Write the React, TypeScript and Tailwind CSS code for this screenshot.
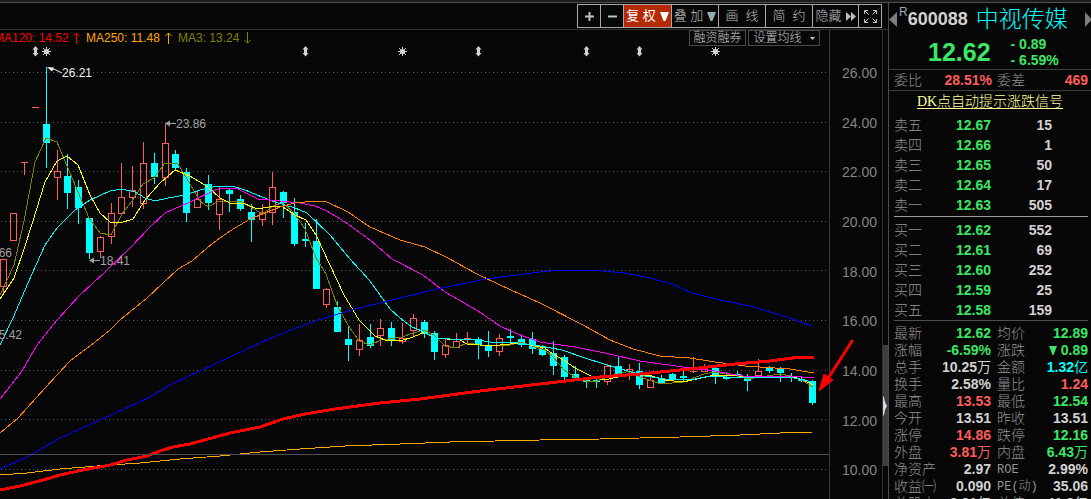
import React from "react";

type Tone = "green" | "red" | "cyan" | "white";

const toneClass: Record<Tone, string> = {
  green: "text-[#3ce664]",
  red: "text-[#ff5c5c]",
  cyan: "text-[#00ffff]",
  white: "text-[#d2d2d2]",
};

const cjk = "font-['Liberation_Sans','Noto_Sans_CJK_SC',sans-serif]";
const mono = "font-['Liberation_Mono','Noto_Sans_CJK_SC',monospace]";
const serif = "font-['Liberation_Serif','Noto_Sans_CJK_SC',serif]";

/* x centre, high, body top, body bottom, low, rising */
type Candle = [number, number, number, number, number, boolean];

const candles: Candle[] = [
  [3, 259, 259, 286, 294, true],
  [13, 213, 213, 240, 240, true],
  [24, 162, 162, 162, 175, true],
  [35, 107, 107, 107, 107, true],
  [46, 67, 124, 143, 168, false],
  [57, 150, 171, 177, 200, true],
  [67, 154, 176, 193, 209, false],
  [78, 180, 187, 208, 224, false],
  [89, 218, 218, 253, 259, false],
  [100, 236, 237, 251, 258, true],
  [111, 203, 213, 236, 244, true],
  [121, 163, 197, 213, 215, true],
  [132, 166, 190, 197, 207, true],
  [143, 142, 163, 203, 209, true],
  [154, 153, 163, 177, 184, false],
  [165, 124, 143, 177, 186, true],
  [175, 150, 154, 168, 171, false],
  [186, 168, 172, 213, 222, false],
  [197, 191, 199, 207, 208, true],
  [208, 175, 184, 203, 210, false],
  [219, 186, 199, 214, 230, true],
  [229, 188, 190, 194, 212, false],
  [240, 195, 199, 209, 211, false],
  [251, 204, 212, 220, 242, false],
  [262, 204, 212, 219, 226, true],
  [272, 172, 187, 212, 225, true],
  [283, 191, 192, 203, 218, false],
  [294, 198, 212, 244, 246, false],
  [305, 223, 239, 241, 247, false],
  [316, 219, 241, 289, 289, false],
  [326, 288, 289, 304, 308, true],
  [337, 301, 307, 332, 332, false],
  [348, 326, 339, 345, 361, false],
  [359, 324, 340, 349, 356, true],
  [370, 324, 337, 346, 348, false],
  [380, 319, 328, 335, 346, true],
  [391, 322, 328, 341, 346, false],
  [402, 323, 338, 341, 344, true],
  [413, 314, 318, 330, 336, true],
  [424, 320, 322, 334, 338, false],
  [434, 331, 333, 352, 360, false],
  [445, 339, 345, 354, 358, true],
  [456, 333, 341, 347, 348, true],
  [467, 332, 338, 338, 344, true],
  [478, 337, 339, 345, 359, false],
  [488, 331, 346, 351, 357, false],
  [499, 334, 338, 351, 356, true],
  [510, 329, 336, 338, 343, false],
  [521, 336, 339, 345, 347, false],
  [532, 332, 339, 349, 354, false],
  [542, 345, 349, 355, 356, false],
  [553, 341, 353, 366, 375, false],
  [564, 355, 357, 377, 380, false],
  [575, 366, 374, 378, 378, false],
  [586, 379, 380, 382, 388, false],
  [596, 379, 380, 382, 388, false],
  [607, 364, 366, 381, 385, true],
  [618, 357, 366, 374, 375, false],
  [629, 364, 369, 371, 380, true],
  [639, 363, 371, 385, 389, false],
  [650, 376, 380, 387, 387, true],
  [661, 375, 379, 383, 383, false],
  [672, 373, 374, 380, 380, false],
  [683, 371, 376, 378, 381, false],
  [693, 357, 371, 371, 373, true],
  [704, 364, 369, 371, 371, true],
  [715, 367, 368, 375, 384, false],
  [726, 372, 377, 379, 380, false],
  [737, 371, 374, 376, 377, false],
  [747, 374, 379, 381, 391, false],
  [758, 359, 371, 375, 378, true],
  [769, 366, 367, 371, 373, false],
  [780, 367, 369, 373, 382, false],
  [791, 373, 376, 378, 382, false],
  [801, 377, 379, 381, 382, false],
  [812, 380, 381, 403, 405, false],
];

const averages = [
  {
    name: "MA3",
    color: "#808000",
    width: 1,
    points:
      "0,295 14,265 24,221 35,162 46,138 57,142 67,166 78,192 89,218 100,233 111,235 122,214 132,201 143,184 154,178 165,163 178,164 190,184 200,201 208,207 219,201 240,201 251,207 262,214 275,205 283,203 294,213 305,229 316,258 326,274 337,305 348,325 359,341 370,345 381,340 402,337 413,333 424,330 434,335 445,346 456,348 467,343 480,345 510,345 521,342 532,346 545,350 553,357 564,370 575,377 586,381 597,381 610,376 630,371 640,377 661,384 683,382 704,374 715,372 737,376 747,379 780,374 791,376 803,381 813,387",
  },
  {
    name: "MA5",
    color: "#ffff00",
    width: 1,
    points:
      "0,299 14,278 24,249 33,221 45,182 57,161 67,156 78,165 90,195 100,213 110,222 120,223 133,219 145,200 160,183 175,170 190,176 208,187 220,198 230,203 245,204 255,208 263,208 275,206 283,207 295,215 306,220 316,235 330,265 344,295 359,320 375,336 385,340 400,341 413,337 425,332 435,338 447,339 460,340 467,344 480,345 500,345 520,343 535,346 545,348 553,354 565,361 575,368 595,378 605,380 630,374 652,376 665,380 683,382 710,376 730,375 747,377 760,377 790,376 803,380 813,385",
  },
  {
    name: "MA10",
    color: "#00ffff",
    width: 1,
    points:
      "0,345 13,318 28,283 45,245 57,228 75,210 90,200 110,191 122,189 135,192 145,198 155,201 168,198 185,195 200,190 213,187 232,186 245,190 262,197 275,202 295,208 307,213 330,235 350,259 370,281 390,309 400,318 412,327 422,331 435,338 450,339 478,340 490,342 510,342 525,344 540,346 562,350 585,358 607,365 628,371 645,376 665,379 690,380 710,376 740,378 760,377 790,377 812,382",
  },
  {
    name: "MA20",
    color: "#ff00ff",
    width: 1,
    points:
      "0,399 22,371 37,345 57,320 80,295 105,272 130,248 150,227 165,213 190,202 215,190 226,188 238,189 258,199 270,200 300,203 315,206 327,211 345,222 370,240 392,259 423,275 445,292 478,311 500,326 515,333 540,342 575,347 605,353 640,361 690,368 715,371 730,374 750,377 790,376 814,378",
  },
  {
    name: "MA30",
    color: "#ff8000",
    width: 1,
    points:
      "0,433 18,418 45,388 70,361 90,346 110,330 120,320 147,298 178,269 192,261 213,243 230,231 250,219 280,207 295,203 315,201 327,202 348,212 370,227 400,240 425,247 448,258 475,273 500,285 540,303 583,325 610,340 633,349 660,356 690,358 715,362 745,366 790,369 814,373",
  },
  {
    name: "MA60",
    color: "#0000ff",
    width: 1,
    points:
      "0,469 27,457 60,438 100,420 150,397 170,385 200,371 230,357 260,343 283,333 315,321 355,309 384,302 437,289 486,279 540,272 560,270 592,270 625,273 650,278 672,284 692,293 720,300 750,306 790,318 812,326",
  },
  {
    name: "MA250",
    color: "#ffa500",
    width: 1,
    points:
      "0,475 27,473 60,469 110,465 140,463 180,459 220,456 260,452 300,449 345,446 400,444 450,442 540,440 600,439 680,437 740,435 780,433 812,432",
  },
  {
    name: "MA120",
    color: "#ff0000",
    width: 3,
    points:
      "0,490 20,486 43,480 60,475 83,470 100,467 110,465 127,460 147,456 160,451 173,447 190,444 230,433 260,427 283,419 305,414 335,409 380,403 420,399 450,395 480,391 540,384 600,377 640,374 690,369 735,364 770,361 800,357 814,357",
  },
];

const gridLines = [72, 122, 171, 221, 270, 320, 370, 419, 469];
const priceTicks = ["26.00", "24.00", "22.00", "20.00", "18.00", "16.00", "14.00", "12.00", "10.00"];
const dividendMarks = [35, 305, 478, 586, 639];
const eventMarks = [46, 402, 715];

function CandleShape({ data }: { data: Candle }) {
  const [x, high, top, bottom, low, rising] = data;
  if (!rising) {
    return (
      <g fill="#00ffff">
        <rect x={x} y={high} width={1} height={Math.max(low - high, 1)} />
        <rect x={x - 3} y={top} width={7} height={bottom - top} />
      </g>
    );
  }
  return (
    <g fill="#ff5c5c">
      <rect x={x} y={high} width={1} height={top - high} />
      <rect x={x} y={bottom} width={1} height={low - bottom} />
      {bottom - top < 2 ? (
        <rect x={x - 3} y={top} width={7} height={1} />
      ) : (
        <path
          fillRule="evenodd"
          d={`M${x - 3} ${top}h7V${bottom + 1}h-7ZM${x - 2} ${top + 1}V${bottom}h5V${top + 1}Z`}
        />
      )}
    </g>
  );
}

function Chart() {
  return (
    <svg
      className={`block h-full w-full text-xs ${cjk}`}
      viewBox="0 46 829 453"
      preserveAspectRatio="xMaxYMin slice"
      role="img"
      aria-label="600088 K线图"
    >
      <g stroke="#5a5a5a" strokeDasharray="1 3" shapeRendering="crispEdges">
        {gridLines.map((y) => (
          <line key={y} x1="1" x2="829" y1={y + 0.5} y2={y + 0.5} />
        ))}
      </g>
      <g fill="#d0d0d0">
        {dividendMarks.map((x) => (
          <path key={x} d={`M${x + 0.5} 46l3 3.500h-1.500v3.500h1.500l-3 3.500l-3-3.500h1.500v-3.500h-1.500z`} />
        ))}
        {eventMarks.map((x) => (
          <g key={x}>
            <circle cx={x + 0.5} cy="51.500" r="2.600" />
            <path
              stroke="#d0d0d0"
              d={`M${x + 0.5} 47v9M${x - 4} 51.500h9M${x - 3} 48l7 7M${x + 4} 48l-7 7`}
            />
          </g>
        ))}
      </g>
      <g shapeRendering="crispEdges">
        {candles.map((c) => (
          <CandleShape key={c[0]} data={c} />
        ))}
      </g>
      <g fill="none" shapeRendering="crispEdges">
        {averages.map((a) => (
          <polyline key={a.name} points={a.points} stroke={a.color} strokeWidth={a.width} />
        ))}
      </g>
      <line x1="0" x2="829" y1="454.500" y2="454.500" stroke="#505050" />
      <g stroke="#f4f4f4" fill="#f4f4f4">
        <path fill="none" d="M50 68.500l5 1l7 3.500" />
        <path stroke="none" d="M47 67l7 .5l-2 4z" />
        <text x="62" y="77" stroke="none">26.21</text>
      </g>
      <g stroke="#a0a0a0" fill="#a0a0a0">
        <path d="M167 123.500h9" />
        <path stroke="none" d="M165 123.500l5-3v6z" />
        <text x="176" y="128" stroke="none">23.86</text>
        <path d="M91 260.500h9" />
        <path stroke="none" d="M89 260.500l5-3v6z" />
        <text x="100" y="265" stroke="none">18.41</text>
        <text x="12" y="257" stroke="none" textAnchor="end">66</text>
        <text x="22" y="339" stroke="none" textAnchor="end">5.42</text>
      </g>
    </svg>
  );
}

function PointerArrow() {
  return (
    <svg className="absolute top-[309px] left-[818px]" width="37" height="54" viewBox="818 339 37 54" aria-hidden="true">
      <path d="M852 341L829 377" stroke="#ff0000" strokeWidth="3" strokeLinecap="round" />
      <path d="M819 391L824 374L827 376L833 380Z" fill="#ff0000" stroke="#ff0000" />
    </svg>
  );
}

function ToolButton({ children, label, className = "" }: { children: React.ReactNode; label?: string; className?: string }) {
  return (
    <button
      type="button"
      aria-label={label}
      className={`flex h-6 items-center justify-center gap-1 border border-[#a8a8a8] whitespace-nowrap text-[#c0c0c0] ${className}`}
    >
      {children}
    </button>
  );
}

function Caret({ className = "" }: { className?: string }) {
  return (
    <svg className={className} width="9" height="9" viewBox="0 0 9 9" fill="currentColor" aria-hidden="true">
      <path d="M0 0h9L5.500 9h-2z" />
    </svg>
  );
}

function Toolbar() {
  return (
    <div className="flex h-[27px] shrink-0 items-center justify-end border-b border-[#303030] pr-[6px] text-[13px] leading-4 font-light">
      <ToolButton label="放大" className="w-6">
        <svg width="9" height="9" viewBox="0 0 9 9" stroke="currentColor" strokeWidth="2"><path d="M4.500 0v9M0 4.500h9" /></svg>
      </ToolButton>
      <ToolButton label="缩小" className="-ml-px w-6">
        <svg width="9" height="9" viewBox="0 0 9 9" stroke="currentColor" strokeWidth="2"><path d="M0 4.500h9" /></svg>
      </ToolButton>
      <ToolButton className="-ml-px w-[49px] bg-[#b32a05] font-normal text-white">
        <span>复 权</span>
        <Caret />
      </ToolButton>
      <ToolButton className="-ml-px w-12">
        <span>叠 加</span>
        <Caret className="text-[#98a8b0]" />
      </ToolButton>
      <ToolButton className="-ml-px w-12">画&nbsp; 线</ToolButton>
      <ToolButton className="-ml-px w-12">简&nbsp; 约</ToolButton>
      <ToolButton className="-ml-px w-[47px]">
        <span>隐藏</span>
        <svg width="10" height="9" viewBox="0 0 10 9" fill="currentColor" aria-hidden="true"><path d="M0 0l5 4.500l-5 4.500zM5 0l5 4.500l-5 4.500z" /></svg>
      </ToolButton>
      <ToolButton label="全屏" className="-ml-px w-6">
        <svg width="13" height="13" viewBox="0 0 13 13" fill="none" stroke="currentColor" aria-hidden="true">
          <path d="M.5 4V.5H4M.5.500l4 4M9 .5h3.500V4M12.500.500l-4 4M.5 9v3.500H4M.5 12.500l4-4M9 12.500h3.500V9M12.500 12.500l-4-4" />
        </svg>
      </ToolButton>
    </div>
  );
}

function TrendArrow({ down = false }: { down?: boolean }) {
  return (
    <svg width="7" height="12" viewBox="0 0 7 12" fill="none" stroke="currentColor" aria-hidden="true">
      <path d={down ? "M3.500 0v11M.5 8l3 3l3-3" : "M3.500 12V1M.5 4l3-3l3 3"} />
    </svg>
  );
}

function Legend() {
  return (
    <div className="flex h-4 shrink-0 items-center justify-between overflow-hidden pr-[9px] text-xs leading-4">
      <div className="-ml-1.5 flex h-4 items-center gap-[6px] whitespace-nowrap">
        <span className="flex w-[86px] items-center justify-between text-[#ff0000]">
          MA120: 14.52 <TrendArrow />
        </span>
        <span className="flex w-[86px] items-center justify-between text-[#ffa500]">
          MA250: 11.48 <TrendArrow />
        </span>
        <span className="flex w-[73px] items-center justify-between text-[#808000]">
          MA3: 13.24 <TrendArrow down />
        </span>
      </div>
      <div className="flex items-center gap-[2px] font-light text-[#c8c8c8]">
        <button type="button" className="h-4 w-[57px] border border-[#4a4a4a] text-center leading-[14px] whitespace-nowrap">
          融资融券
        </button>
        <button type="button" className="flex h-4 w-[72px] items-center justify-center gap-2 border border-[#4a4a4a] leading-[14px] whitespace-nowrap">
          设置均线
          <svg width="5" height="3" viewBox="0 0 5 3" fill="currentColor" aria-hidden="true"><path d="M0 0h5L2.500 3z" /></svg>
        </button>
      </div>
    </div>
  );
}

const asks: [string, string, string][] = [
  ["卖五", "12.67", "15"],
  ["卖四", "12.66", "1"],
  ["卖三", "12.65", "50"],
  ["卖二", "12.64", "17"],
  ["卖一", "12.63", "505"],
];
const bids: [string, string, string][] = [
  ["买一", "12.62", "552"],
  ["买二", "12.61", "69"],
  ["买三", "12.60", "252"],
  ["买四", "12.59", "25"],
  ["买五", "12.58", "159"],
];

function Levels({ rows, label }: { rows: [string, string, string][]; label: string }) {
  return (
    <table className="w-full table-fixed border-collapse text-sm leading-5" aria-label={label}>
      <tbody>
        {rows.map(([name, price, qty]) => (
          <tr key={name} className="h-5">
            <th scope="row" className="w-11 p-0 text-left font-light text-[#949494]">{name}</th>
            <td className="w-[53px] p-0 text-right font-bold text-[#3ce664]">{price}</td>
            <td className="p-0 pr-9 text-right font-bold text-[#d2d2d2]">{qty}</td>
          </tr>
        ))}
      </tbody>
    </table>
  );
}

type Cell = { name: string; value: string; unit?: string; tone: Tone; down?: boolean };

const stats: [Cell, Cell][] = [
  [{ name: "最新", value: "12.62", tone: "green" }, { name: "均价", value: "12.89", tone: "green" }],
  [{ name: "涨幅", value: "-6.59%", tone: "green" }, { name: "涨跌", value: "0.89", tone: "green", down: true }],
  [{ name: "总手", value: "10.25", unit: "万", tone: "white" }, { name: "金额", value: "1.32", unit: "亿", tone: "cyan" }],
  [{ name: "换手", value: "2.58%", tone: "white" }, { name: "量比", value: "1.24", tone: "red" }],
  [{ name: "最高", value: "13.53", tone: "red" }, { name: "最低", value: "12.54", tone: "green" }],
  [{ name: "今开", value: "13.51", tone: "white" }, { name: "昨收", value: "13.51", tone: "white" }],
  [{ name: "涨停", value: "14.86", tone: "red" }, { name: "跌停", value: "12.16", tone: "green" }],
  [{ name: "外盘", value: "3.81", unit: "万", tone: "red" }, { name: "内盘", value: "6.43", unit: "万", tone: "green" }],
  [{ name: "净资产", value: "2.97", tone: "white" }, { name: "ROE", value: "2.99%", tone: "white" }],
  [{ name: "收益㈠", value: "0.090", tone: "white" }, { name: "PE(动)", value: "35.06", tone: "white" }],
  [{ name: "总股本", value: "3.31", unit: "亿", tone: "white" }, { name: "总值", value: "41.8", unit: "亿", tone: "white" }],
];

function StatPair({ cell, second = false }: { cell: Cell; second?: boolean }) {
  const latin = /^[A-Z]/.test(cell.name);
  return (
    <>
      <th
        scope="row"
        className={`p-0 text-left font-light whitespace-nowrap text-[#949494] ${second ? "w-10 pl-[6px]" : "w-11"} ${latin ? `text-xs ${mono}` : ""}`}
      >
        {cell.name}
      </th>
      <td className={`p-0 text-right font-bold whitespace-nowrap ${second ? "pr-[3px]" : "w-[53px]"} ${toneClass[cell.tone]}`}>
        {cell.down && (
          <svg className="mr-1 inline-block align-baseline" width="8" height="9" viewBox="0 0 8 9" fill="currentColor" aria-hidden="true">
            <path d="M0 0h8L4.500 9h-1z" />
          </svg>
        )}
        {cell.value}
        {cell.unit && <span className="font-normal">{cell.unit}</span>}
      </td>
    </>
  );
}

function QuotePanel() {
  return (
    <aside className="flex w-[203px] shrink-0 flex-col overflow-hidden border-l border-[#4a4a4a]">
      <header className="flex h-8 shrink-0 items-center">
        <button type="button" aria-label="上一只" className="text-[#7c7c7c]">
          <svg width="8" height="15" viewBox="0 0 8 15" fill="currentColor"><path d="M8 0v15L0 7.500z" /></svg>
        </button>
        <span className="ml-[2px] self-start pt-px text-xs leading-4 text-[#a0a8b8]">R</span>
        <span className="text-lg leading-8 font-bold text-[#d2d2d2]">600088</span>
        <h1 className="ml-2 text-[23px] leading-8 font-light whitespace-nowrap text-[#00ffff]">中视传媒</h1>
        <button type="button" aria-label="下一只" className="ml-auto text-[#7c7c7c]">
          <svg width="6" height="15" viewBox="0 0 6 15" fill="currentColor"><path d="M0 0l7 7.500L0 15z" /></svg>
        </button>
      </header>
      <div className="flex h-[34px] shrink-0 items-center pl-[39px] font-bold text-[#3ce664]">
        <span className="text-[25px] leading-8">12.62</span>
        <div className="ml-5 text-sm leading-4">
          <div>- 0.89</div>
          <div>- 6.59%</div>
        </div>
      </div>
      <table className="w-full shrink-0 table-fixed border-collapse border-y border-[#3c3c3c] text-sm leading-5">
        <tbody>
          <tr className="h-5">
            <th scope="row" className="w-12 p-0 pl-[5px] text-left font-light text-[#949494]">委比</th>
            <td className="w-[55px] p-0 text-right font-bold text-[#ff5c5c]">28.51%</td>
            <th scope="row" className="w-10 p-0 pl-[5px] text-left font-light text-[#949494]">委差</th>
            <td className="p-0 pr-[3px] text-right font-bold text-[#ff5c5c]">469</td>
          </tr>
        </tbody>
      </table>
      <a href="#dk" className={`h-6 shrink-0 text-center text-sm leading-[22px] font-light whitespace-nowrap text-[#ffff99] underline underline-offset-2 ${serif}`}>
        DK点自动提示涨跌信号
      </a>
      <div className="shrink-0 pl-[5px]">
        <div className="mr-[3px] border-b border-[#a0a0a0] pb-px">
          <Levels rows={asks} label="卖盘" />
        </div>
        <div className="mr-[3px] border-b border-[#505050] pt-[3px]">
          <Levels rows={bids} label="买盘" />
        </div>
        <table className="mt-1 w-full table-fixed border-collapse text-sm leading-[17px]" aria-label="行情指标">
          <tbody>
            {stats.map(([a, b]) => (
              <tr key={a.name} className="h-[17px]">
                <StatPair cell={a} />
                <StatPair cell={b} second />
              </tr>
            ))}
          </tbody>
        </table>
      </div>
    </aside>
  );
}

export default function App() {
  return (
    <div className={`flex h-screen w-full flex-col overflow-hidden bg-[#070707] ${cjk}`}>
      <div className="h-[3px] shrink-0 border-b border-[#505050] bg-[#1c1c1c]" />
      <main className="flex min-h-0 flex-1">
        <section className="flex min-w-0 flex-1 flex-col">
          <Toolbar />
          <div className="relative flex min-h-0 flex-1">
            <div className="flex min-w-0 flex-1 flex-col">
              <Legend />
              <div className="min-h-0 flex-1">
                <Chart />
              </div>
            </div>
            <ol className="flex w-[53px] shrink-0 flex-col border-l border-[#383838] pt-[18px] pb-1 text-sm text-[#848484]">
              {priceTicks.map((t) => (
                <li key={t} className="flex flex-1 items-center justify-end pr-[5px]">{t}</li>
              ))}
            </ol>
            <div className="flex w-[6px] shrink-0 flex-col border-l border-[#303030]">
              <button type="button" aria-label="收起行情栏" className="mt-auto mb-[33px] flex h-[121px] w-full items-center bg-[#404040]">
                <svg width="4" height="20" viewBox="0 0 4 20" fill="#d8d8d8"><path d="M0 0l1 1l1 5l2 4l-2 4l-1 5l-1 1z" /></svg>
              </button>
            </div>
            <PointerArrow />
          </div>
        </section>
        <QuotePanel />
      </main>
    </div>
  );
}
